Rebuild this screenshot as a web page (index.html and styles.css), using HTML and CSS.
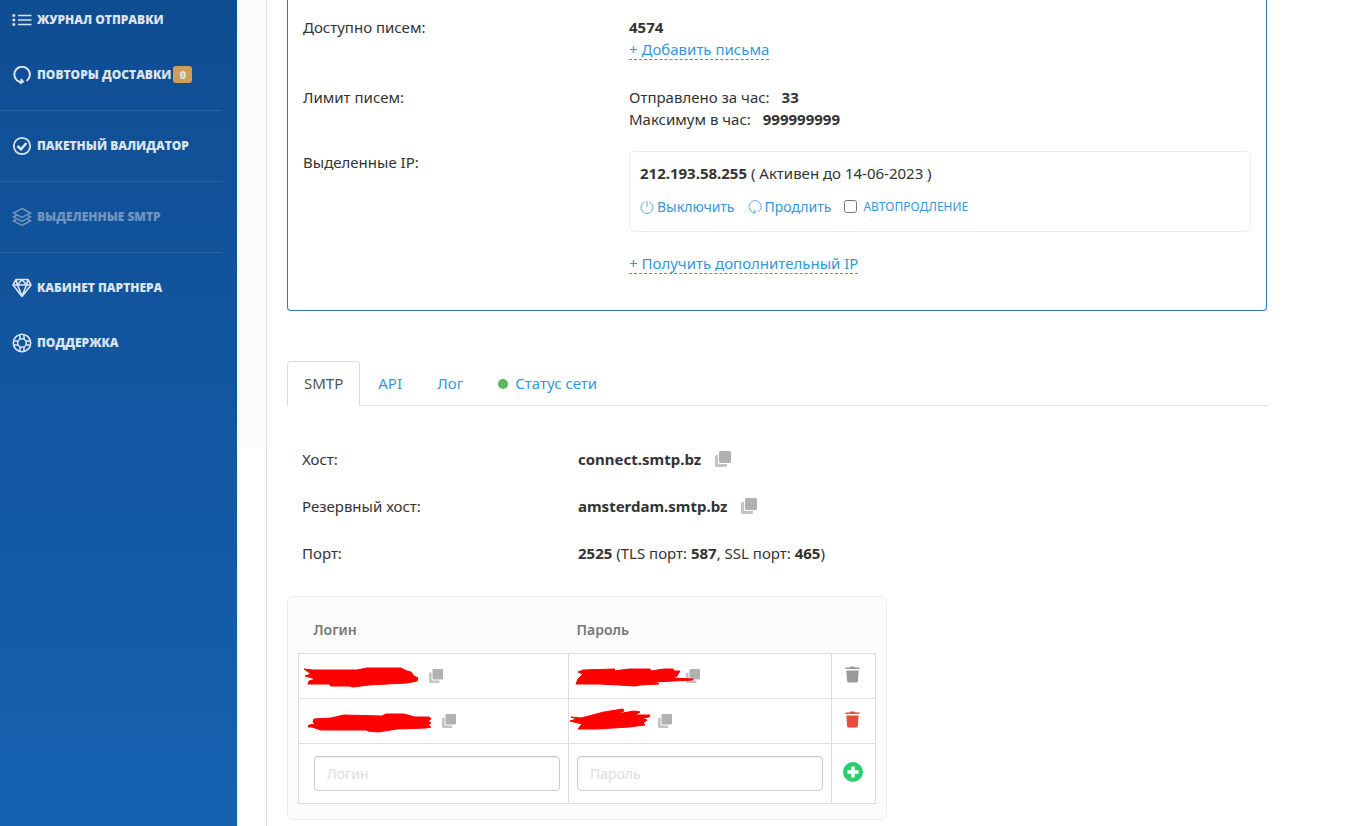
FILE: index.html
```html
<!DOCTYPE html>
<html lang="ru">
<head>
<meta charset="utf-8">
<meta name="viewport" content="width=device-width, initial-scale=1">
<title>SMTP</title>
<link rel="stylesheet" href="styles.css">
</head>
<body>
<svg class="defs" aria-hidden="true">
  <symbol id="copy" viewBox="0 0 16 16"><path fill="#c4c4c4" d="M0 5.500Q0 4 1.500 4H3V11.500Q3 13 4.500 13H12V14.500Q12 16 10.500 16H1.500Q0 16 0 14.500Z"/><rect x="4" y="0" width="12" height="12" rx="1.500" fill="#b1b1b1"/></symbol>
  <symbol id="trash" viewBox="0 0 15 17"><path fill="currentColor" d="M5 1.500Q5 .5 6 .5H9Q10 .5 10 1.500H14.500V3H.5V1.500ZM1.300 4.500H13.700L12.800 15.500Q12.700 16.500 11.700 16.500H3.300Q2.300 16.500 2.200 15.500Z"/></symbol>
  <symbol id="refresh" viewBox="0 0 18 18"><path fill="none" stroke="currentColor" d="M13.500 15A7.800 7.800 0 1 0 4 14.500Q6 16 9.500 15.700M8 13L10 15.700L6.500 17.500"/></symbol>
</svg>
<div class="page">
  <nav class="sidebar">
    <a class="item first" href="#"><svg class="icon" viewBox="0 0 20 20" fill="none" stroke="currentColor" stroke-width="1.500"><path d="M6 5.500H19.500M6 10H19.500M6 14.500H19.500"/><path stroke-width="2.500" d="M.5 5.500H3.200M.5 10H3.200M.5 14.500H3.200"/></svg>Журнал отправки</a>
    <a class="item" href="#"><svg class="icon thick"><use href="#refresh"/></svg>Повторы доставки<span class="badge">0</span></a>
    <hr class="rule">
    <a class="item" href="#"><svg class="icon" viewBox="0 0 20 20" fill="none" stroke="currentColor" stroke-width="1.800"><circle cx="10" cy="10" r="8.200"/><path stroke-width="2.500" d="M5.500 10L9 13.300L14.500 7"/></svg>Пакетный валидатор</a>
    <hr class="rule">
    <a class="item dim" href="#"><svg class="icon" viewBox="0 0 20 20" fill="none" stroke="currentColor" stroke-width="1.500"><path d="M10 1.500L18.500 6L10 10.500L1.500 6ZM4 8.500L1.500 10L10 14.500L18.500 10L16 8.500M4 12.500L1.500 14L10 18.500L18.500 14L16 12.500"/></svg>Выделенные SMTP</a>
    <hr class="rule">
    <a class="item" href="#"><svg class="icon" viewBox="0 0 20 20" fill="none" stroke="currentColor" stroke-width="1.600" stroke-linejoin="round"><path d="M4 1.500H16L19 7L10 18.500L1 7ZM1 7H19M5.500 7L10 18L14.500 7M4 1.500L5.500 7L10 1.500L14.500 7L16 1.500"/></svg>Кабинет партнера</a>
    <a class="item" href="#"><svg class="icon" viewBox="0 0 20 20" fill="none" stroke="currentColor" stroke-width="1.600"><circle cx="10" cy="10" r="8.700"/><circle cx="10" cy="10" r="4.300"/><path d="M8 1.500V6M12 1.500V6M8 14V18.500M12 14V18.500M1.500 8H6M1.500 12H6M14 8H18.500M14 12H18.500"/></svg>Поддержка</a>
  </nav>
  <div class="gutter"><div class="shade"></div></div>
  <main class="main">
    <section class="panel">
      <div class="label">Доступно писем:</div>
      <div><b>4574</b><br><a class="dashed" href="#">+ Добавить письма</a></div>
      <div class="label">Лимит писем:</div>
      <div>Отправлено за час: <b class="num">33</b><br>Максимум в час: <b class="num">999999999</b></div>
      <div class="label up">Выделенные IP:</div>
      <div>
        <div class="ip">
          <div><b>212.193.58.255</b> ( Активен до 14-06-2023 )</div>
          <div class="actions">
            <a href="#"><svg class="mini" viewBox="0 0 18 18" fill="none" stroke="currentColor"><path d="M9 1V9M6 2.500A7.700 7.700 0 1 0 12 2.500"/></svg>Выключить</a>
            <a href="#"><svg class="mini"><use href="#refresh"/></svg>Продлить</a>
            <label class="auto"><input type="checkbox">Автопродление</label>
          </div>
        </div>
        <a class="dashed" href="#">+ Получить дополнительный IP</a>
      </div>
    </section>
    <div class="tabs">
      <a class="tab active" href="#">SMTP</a>
      <a class="tab" href="#">API</a>
      <a class="tab" href="#">Лог</a>
      <a class="tab net" href="#"><span class="dot"></span>Статус сети</a>
    </div>
    <section class="hosts">
      <div>Хост:</div>
      <div class="value"><b>connect.smtp.bz</b><button class="copy" aria-label="Копировать"><svg><use href="#copy"/></svg></button></div>
      <div>Резервный хост:</div>
      <div class="value"><b>amsterdam.smtp.bz</b><button class="copy" aria-label="Копировать"><svg><use href="#copy"/></svg></button></div>
      <div>Порт:</div>
      <div><b>2525</b> (TLS порт: <b>587</b>, SSL порт: <b>465</b>)</div>
    </section>
    <section class="box">
      <table class="creds">
        <colgroup><col><col class="colpass"><col class="coltool"></colgroup>
        <thead><tr><th>Логин</th><th>Пароль</th><th></th></tr></thead>
        <tbody>
          <tr>
            <td><div class="secret w115"><button class="copy sm" aria-label="Копировать"><svg><use href="#copy"/></svg></button></div>
              <svg class="mark"><path d="M5 15L14 16L22 16L58 16L68 14L102 14L108 17L112 18L115 22L119 24L118 27L108 29L88 30L70 31L54 33L50 32L32 32L30 30L9 30L10 27L17 25L6 22L12 20Z"/></svg></td>
            <td><div class="secret w110"><button class="copy sm" aria-label="Копировать"><svg><use href="#copy"/></svg></button></div>
              <svg class="mark"><path d="M9 18L14 16L46 15L45 17L60 15L81 15L82 17L95 15L104 15L105 17L111 17L108 22L104 24L124 25L124 26L86 28L90 30L71 31L66 32L50 31L30 30L7 30L9 25L14 20Z"/></svg></td>
            <td class="tool"><button class="trash" aria-label="Удалить"><svg><use href="#trash"/></svg></button></td>
          </tr>
          <tr>
            <td><div class="secret w128"><button class="copy sm" aria-label="Копировать"><svg><use href="#copy"/></svg></button></div>
              <svg class="mark"><path d="M15 20L32 19L45 16L83 17L87 15L105 15L116 18L130 18L132 20L129 22L132 24L129 26L132 28L127 29L98 30L79 33L69 32L68 31L22 31L13 28L9 28L10 26L16 25L14 23Z"/></svg></td>
            <td><div class="secret w81"><button class="copy sm" aria-label="Копировать"><svg><use href="#copy"/></svg></button></div>
              <svg class="mark"><path d="M2 18L12 19L35 13L54 10L55 12L48 15L65 12L71 13L66 16L81 16L80 18L73 19L78 21L74 24L76 26L60 28L28 30L9 30L13 25L1 22L8 20Z"/></svg></td>
            <td class="tool"><button class="trash red" aria-label="Удалить"><svg><use href="#trash"/></svg></button></td>
          </tr>
          <tr class="new">
            <td><input class="field" type="text" placeholder="Логин" aria-label="Логин"></td>
            <td><input class="field" type="text" placeholder="Пароль" aria-label="Пароль"></td>
            <td class="tool"><button class="add" aria-label="Добавить"><svg viewBox="0 0 20 20"><circle cx="10" cy="10" r="10" fill="#2ecc71"/><path d="M10 4.500V15.500M4.500 10H15.500" stroke="#fff" stroke-width="3.500"/></svg></button></td>
          </tr>
        </tbody>
      </table>
    </section>
  </main>
</div>
</body>
</html>
```
FILE: styles.css
```css
* { box-sizing: border-box; }
body { margin: 0; background: #fff; color: #333; font: 15px/22px "Noto Sans", sans-serif; }
a { color: #3498db; text-decoration: none; }
b { font-weight: 700; }
button { border: 0; padding: 0; background: none; cursor: pointer; }
.defs { display: none; }
.page { display: flex; min-height: 100vh; }

.sidebar { flex: 0 0 237px; background: linear-gradient(#0f4d92, #1561b0); }
.item { display: flex; align-items: center; height: 55px; padding: 0 0 2px 12px; color: #dbe4ef; font: 800 12px/16px "Open Sans", sans-serif; text-transform: uppercase; }
.item.first { height: 48px; padding-bottom: 8px; }
.item.dim { color: #7295bf; }
.icon { width: 20px; height: 20px; margin-right: 5px; }
.icon.thick { stroke-width: 2; padding: 1px; }
.badge { width: 19px; height: 17px; margin-left: 2px; border-radius: 3px; background: #cf9f57; font-size: 11px; line-height: 17px; text-align: center; }
.rule { height: 1px; margin: 7px 15px 8px 0; border: 0; background: #2b62a0; }

.gutter { flex: 0 0 30px; border-right: 1px solid #e1e1e1; }
.shade { height: 448px; background: #fbfbfb; }
.main { flex: 1; min-width: 0; padding: 0 79px 6px 20px; }

.panel { display: grid; grid-template-columns: 326px 1fr; row-gap: 26px; padding: 16px 15px 36px; border: 1px solid #337ab7; border-top: 0; border-radius: 0 0 4px 4px; }
.label.up { margin-top: -5px; }
.dashed { display: inline-block; border-bottom: 1px dashed #3498db; line-height: 20px; }
.num { margin-left: 8px; }
.ip { margin: -5px 0 20px; padding: 10px 10px 13px; border: 1px solid #ededed; border-radius: 5px; }
.actions { display: flex; align-items: center; margin-top: 12px; font-size: 14px; }
.actions a { display: flex; align-items: center; margin-right: 13px; }
.mini { width: 14px; height: 14px; margin-right: 3px; }
.mini, .icon { overflow: visible; }
.auto { display: flex; align-items: center; color: #3498db; font-size: 12px; text-transform: uppercase; }
.auto input { width: 13px; height: 13px; margin: 0 6px 2px 0; }

.tabs { display: flex; gap: 1px; margin-top: 50px; border-bottom: 1px solid #ddd; }
.tab { min-width: 58px; height: 45px; margin-bottom: -1px; padding: 10px 16px; border: 1px solid transparent; }
.tab.active { border-color: #ddd #ddd #fff; border-radius: 4px 4px 0 0; color: #555; }
.net .dot { display: inline-block; width: 10px; height: 10px; margin-right: 7px; border-radius: 50%; background: #5cb85c; }

.hosts { display: grid; grid-template-columns: 276px 1fr; row-gap: 25px; padding: 42px 15px 32px; }
.value { display: flex; align-items: center; }
.copy { width: 16px; height: 16px; margin-left: 14px; }
.copy svg { display: block; width: 100%; height: 100%; }
.copy.sm { width: 14px; height: 14px; margin: 0; }

.box { max-width: 600px; padding: 10px 10px 15px; border: 1px solid #ededed; border-radius: 6px; background: #fcfcfc; }
.creds { width: 100%; table-layout: fixed; border-collapse: collapse; }
.colpass { width: 263px; }
.coltool { width: 44px; }
.creds th { height: 46px; padding: 0 15px; color: #777; font-size: 14px; font-weight: 600; text-align: left; }
.creds th:nth-child(2) { padding-left: 8px; }
.creds td { position: relative; height: 45px; padding: 0 8px 0 15px; border: 1px solid #ddd; background: #fff; }
.creds td + td { padding: 0 8px; }
.creds td.tool { padding: 0 2px 2px 0; }
.tool button { display: block; margin: 0 auto; }
.new td { height: 60px; }
.secret { display: flex; }
.w115 { padding-left: 115px; }
.w110 { padding-left: 109px; }
.w128 { padding-left: 128px; }
.w81 { padding-left: 81px; }
.mark { position: absolute; inset: 0; width: 100%; height: 100%; fill: #f00; stroke: #f00; stroke-linejoin: round; pointer-events: none; }
.trash { color: #999; }
.trash.red { color: #e74c3c; }
.trash svg { display: block; width: 15px; height: 17px; }
.add svg { display: block; width: 20px; height: 20px; }
.field { display: block; width: 100%; height: 35px; padding: 0 12px; border: 1px solid #ccc; border-radius: 4px; box-shadow: inset 0 1px 1px rgba(0, 0, 0, .075); font: 14px "Noto Sans", sans-serif; }
.field::placeholder { color: #ddd; opacity: 1; }
```
